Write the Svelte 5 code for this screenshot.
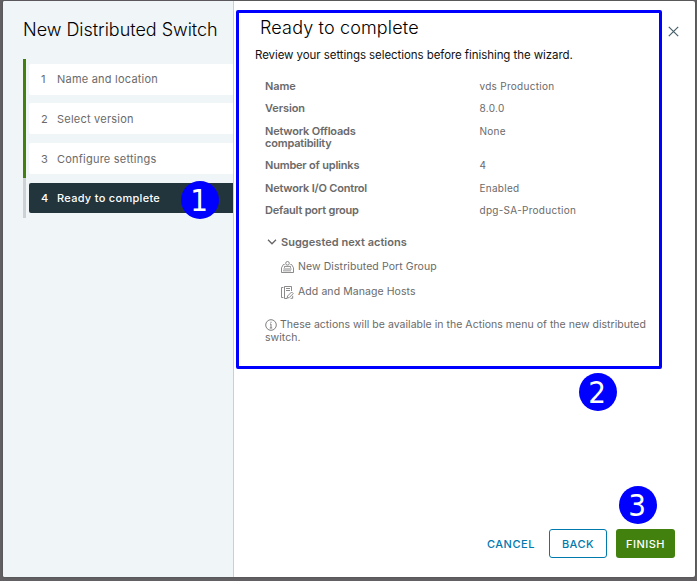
<script>
  const steps = [
    { label: 'Name and location', h: 31, gap: 8 },
    { label: 'Select version', h: 31, gap: 9 },
    { label: 'Configure settings', h: 31, gap: 9 },
    { label: 'Ready to complete', h: 30, gap: 0, active: true }
  ];
  const rows = [
    { label: 'Name', value: 'vds Production', h: 22 },
    { label: 'Version', value: '8.0.0', h: 23 },
    { label: 'Network Offloads compatibility', value: 'None', h: 34 },
    { label: 'Number of uplinks', value: '4', h: 23 },
    { label: 'Network I/O Control', value: 'Enabled', h: 22 },
    { label: 'Default port group', value: 'dpg-SA-Production', h: 22 }
  ];
</script>

<div class="screen">
  <div class="modal">
    <aside>
      <h1>New Distributed Switch</h1>
      <div class="nav">
        <div class="rail"></div>
        <ol>
          {#each steps as step, i}
            <li class:active={step.active} style="height:{step.h}px;margin-bottom:{step.gap}px">
              <span class="num">{i + 1}</span><span class="name">{step.label}</span>
            </li>
          {/each}
        </ol>
      </div>
    </aside>
    <main>
      <header>
        <h2>Ready to complete</h2>
        <svg class="close" width="11" height="11" viewBox="0 0 11 11"><path d="M.8 .8l9.4 9.4M10.2 .8l-9.4 9.4" fill="none" stroke="#48606c" stroke-width="1.2" /></svg>
      </header>
      <p class="intro">Review your settings selections before finishing the wizard.</p>
      <dl>
        {#each rows as row}
          <div class="row" style="height:{row.h}px">
            <dt>{row.label}</dt>
            <dd>{row.value}</dd>
          </div>
        {/each}
      </dl>
      <div class="next">
        <svg width="10" height="6" viewBox="0 0 10 6"><path d="M1 .8l4 4 4-4" fill="none" stroke="#666" stroke-width="1.3" /></svg>
        <span>Suggested next actions</span>
      </div>
      <div class="link">
        <svg width="13" height="12" viewBox="0 0 13 12" fill="none" stroke="#777" stroke-width=".85">
          <path d="M3.6 3.5H2.4L.5 6.8v4.7h12V6.8l-1.9-3.3H9.4" />
          <circle cx="6.5" cy="2.3" r="1.8" />
          <path d="M3.5 6.8V5.4h6V6.8M2.4 8h8.2" />
          <path d="M2.5 9.8h8" stroke-dasharray="1 1" stroke-width="1.4" />
        </svg>
        <span>New Distributed Port Group</span>
      </div>
      <div class="link second">
        <svg width="13" height="13" viewBox="0 0 13 13" fill="none" stroke="#777" stroke-width=".85">
          <path d="M2.4 1.5H.5v10h1.9M10.5 5V.5h-7v12H6" />
          <path d="M5 2.5h4M5 4.5h4" />
          <path d="M6.6 10l4-4 1.6 1.6-4 4-2.1.5zM9.5 12.3h2.2V9.8" />
        </svg>
        <span>Add and Manage Hosts</span>
      </div>
      <p class="note">
        <svg width="12" height="12" viewBox="0 0 12 12"><circle cx="6" cy="6" r="5.3" fill="none" stroke="#717171" stroke-width=".9" /><path d="M6 2.7v1.2M6 5v4M5 5h1M4.8 9h2.4" stroke="#717171" stroke-width=".9" fill="none" /></svg>
        <span class="l1">These actions will be available in the Actions menu of the new distributed</span><br />
        <span class="l2">switch.</span>
      </p>
      <footer>
        <button class="cancel">CANCEL</button>
        <button class="back">BACK</button>
        <button class="finish">FINISH</button>
      </footer>
    </main>
  </div>
  <div class="frame"></div>
  <div class="badge" style="left:181px;top:181px">1</div>
  <div class="badge" style="left:579px;top:373px">2</div>
  <div class="badge" style="left:619px;top:486px">3</div>
</div>

<style>
  :global(body) { background: #626062; overflow: hidden; }
  .screen {
    box-sizing: border-box; position: relative; width: 697px; height: 581px;
    padding: 1px 2px 4px 3px; background: #626062; color: #6a6a6a;
    font: 11px/14px Inter, "Open Sans", sans-serif;
  }
  .modal { display: flex; height: 576px; background: #fff; border-radius: 2px; overflow: hidden; box-shadow: 0 0 2px #444; }
  aside { box-sizing: border-box; width: 231px; flex: none; background: #f0f5f8; border-right: 1px solid #c9cfd4; padding: 17px 0 0 20px; }
  h1, h2, p, dl, dd, ol { margin: 0; padding: 0; }
  h1 { font-size: 18px; line-height: 24px; font-weight: 300; letter-spacing: -0.03px; color: #000; white-space: nowrap; }
  .nav { display: flex; margin-top: 17px; height: 159px; }
  .rail { width: 3px; height: 159px; margin-right: 3px; background: linear-gradient(#42810e 119px, #ccd1d4 119px); }
  ol { list-style: none; flex: 1; padding-top: 5px; }
  li { display: flex; align-items: center; background: #fff; border-radius: 2px 0 0 2px; box-sizing: border-box; padding-left: 12px; }
  li:first-child { padding-bottom: 1px; }
  .num { width: 16px; }
  .name { white-space: nowrap; letter-spacing: 0.22px; }
  li.active { background: #22343c; color: #fff; font-weight: 500; }
  li.active .name { letter-spacing: 0.3px; }
  main { flex: 1; display: flex; flex-direction: column; box-sizing: border-box; padding: 15px 20px 19px 21px; }
  header { display: flex; justify-content: space-between; height: 24px; padding-left: 5px; margin-right: -4px; }
  h2 { font-size: 18px; line-height: 24px; font-weight: 300; letter-spacing: 0.15px; color: #000; white-space: nowrap; }
  .close { margin-top: 10px; }
  .intro { margin-top: 8px; font-size: 11.5px; line-height: 15px; letter-spacing: -0.07px; color: #111; white-space: nowrap; }
  dl { margin: 17px 0 0 10px; }
  .row { display: flex; line-height: 12px; }
  dt { width: 105px; margin-right: 109.5px; font-weight: 600; letter-spacing: -0.2px; }
  .row:nth-child(1) dt, .row:nth-child(2) dt { letter-spacing: -0.1px; }
  .row:nth-child(n + 4) dt { width: 110px; margin-right: 104.5px; white-space: nowrap; }
  dd { font-size: 10px; line-height: 13px; letter-spacing: 0.28px; white-space: nowrap; }
  .next { display: flex; align-items: center; gap: 4px; margin: 9px 0 0 12px; height: 14px; font-weight: 600; letter-spacing: 0.03px; }
  .link { display: flex; align-items: center; gap: 4px; margin: 11px 0 0 26px; height: 14px; font-size: 10.5px; letter-spacing: 0.08px; }
  .note { margin: 19px 0 0 10px; font-size: 10.5px; line-height: 13px; letter-spacing: 0.03px; white-space: nowrap; }
  .note svg { vertical-align: -3px; }
  footer { display: flex; justify-content: flex-end; margin-top: auto; }
  button { font: 500 11px/14px Inter, sans-serif; height: 29px; padding: 0; border: 0; border-radius: 3px; box-sizing: border-box; letter-spacing: 0.5px; color: #0079ad; background: none; white-space: nowrap; }
  .cancel { width: 47px; margin-right: 15px; }
  .back { width: 58px; border: 1px solid #0079ad; margin-right: 9px; }
  .finish { width: 59px; background: #42810e; color: #fff; }
  .frame { position: absolute; left: 236px; top: 10px; width: 420px; height: 353px; border: 3px solid #00f; border-radius: 2px; }
  .badge { position: absolute; width: 38px; height: 38px; border-radius: 50%; background: #00f; color: #fff; font: 31px/39px "DejaVu Sans Condensed", "DejaVu Sans", sans-serif; font-stretch: condensed; text-align: center; text-indent: -2px; }
</style>
